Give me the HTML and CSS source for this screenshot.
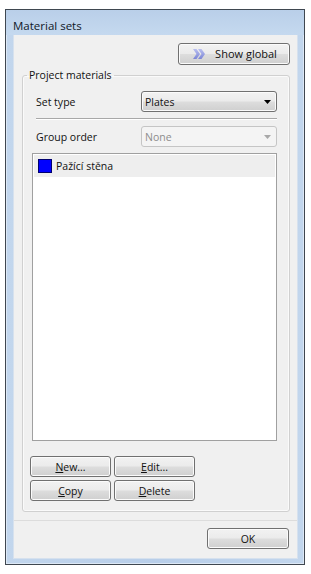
FILE: index.html
```html
<!DOCTYPE html>
<html>
<head>
<meta charset="utf-8">
<link rel="stylesheet" href="styles.css">
</head>
<body>
<div class="window">
  <div class="titlebar">Material sets</div>
  <div class="client">
    <div class="main">
      <div class="top-row">
        <button class="btn btn-global">
          <svg class="chev" width="12" height="10" viewBox="0 0 12 10">
            <defs>
              <linearGradient id="cg" x1="0" y1="0" x2="0" y2="1">
                <stop offset="0" stop-color="#b9bff0"/>
                <stop offset="1" stop-color="#7c86d6"/>
              </linearGradient>
            </defs>
            <polygon points="0,0 3.5,0 7,5 3.5,10 0,10 3.5,5" fill="url(#cg)"/>
            <polygon points="5,0 8.5,0 12,5 8.5,10 5,10 8.5,5" fill="url(#cg)"/>
          </svg>
          <span>Show <u>g</u>lobal</span>
        </button>
      </div>
      <fieldset class="group">
        <legend>Project materials</legend>
        <div class="field">
          <span class="label">Set type</span>
          <div class="combo">
            <span>Plates</span>
            <svg class="arrow" width="7" height="4" viewBox="0 0 7 4"><polygon points="0,0 7,0 3.5,4" fill="#000"/></svg>
          </div>
        </div>
        <div class="sep"></div>
        <div class="field">
          <span class="label">Group order</span>
          <div class="combo disabled">
            <span>None</span>
            <svg class="arrow" width="7" height="4" viewBox="0 0 7 4"><polygon points="0,0 7,0 3.5,4" fill="#a8a8a8"/></svg>
          </div>
        </div>
        <div class="list">
          <div class="item"><span class="swatch"></span><span>Pažící stěna</span></div>
        </div>
        <div class="btn-grid">
          <button class="btn"><u>N</u>ew...</button>
          <button class="btn"><u>E</u>dit...</button>
          <button class="btn"><u>C</u>opy</button>
          <button class="btn"><u>D</u>elete</button>
        </div>
      </fieldset>
    </div>
    <div class="footer">
      <button class="btn btn-ok">OK</button>
    </div>
  </div>
</div>
</body>
</html>
```
FILE: styles.css
```css
* { box-sizing: border-box; }
html, body { margin: 0; padding: 0; background: #ffffff; }
body {
  font-family: "Open Sans", "Noto Sans", sans-serif;
  font-size: 10.5px;
  color: #111;
}
.window {
  margin: 9px 0 0 5px;
  width: 300px;
  height: 556px;
  border: 1px solid #3f4750;
  box-shadow: inset 0 0 0 1px #dde8f5;
  background: linear-gradient(90deg, #c2d6ed 0%, #b8cee9 50%, #c2d6ed 100%);
  display: flex;
  flex-direction: column;
}
.titlebar {
  height: 25px;
  padding: 8px 0 0 7px;
  font-size: 11.5px;
  line-height: 15px;
  color: #101828;
  background: linear-gradient(180deg, #b9cfe9 0%, #c5d9ef 100%);
}
.client {
  flex: 1;
  margin: 0 6px 5px 7px;
  background: #f0f0f0;
  border: 1px solid #d6e1ee;
  border-top: none;
  display: flex;
  flex-direction: column;
}
.main {
  padding: 8px 0 0 0;
}
.top-row {
  display: flex;
  justify-content: flex-end;
  padding-right: 7px;
}
.btn {
  font-family: inherit;
  font-size: inherit;
  color: #111;
  height: 21px;
  padding: 0;
  border: 1px solid #707070;
  border-radius: 3px;
  background: linear-gradient(180deg, #f2f2f2 0%, #ebebeb 48%, #dddddd 52%, #cfcfcf 100%);
  box-shadow: inset 0 0 0 1px #fbfbfb;
  display: flex;
  align-items: center;
  justify-content: center;
  line-height: 14px;
}
.btn-global {
  width: 112px;
  height: 22px;
  gap: 10px;
  padding-left: 2px;
  font-size: 11px;
}
.chev { display: block; }
.group {
  margin: 3px 7px 0 8px;
  padding: 9px 12px 10px 9px;
  border: 1px solid #d0d0d0;
  border-radius: 3px;
  box-shadow: inset 0 0 0 1px #fafafa;
  min-width: 0;
}
.group legend {
  padding: 0 2px;
  margin-left: -5px;
  line-height: 14px;
  height: 14px;
}
.field {
  display: flex;
  align-items: center;
  height: 21px;
}
.label {
  width: 109px;
  padding-left: 4px;
  flex: none;
}
.combo {
  flex: 1;
  height: 21px;
  border: 1px solid #707070;
  border-radius: 3px;
  background: linear-gradient(180deg, #f2f2f2 0%, #ebebeb 48%, #dddddd 52%, #cfcfcf 100%);
  box-shadow: inset 0 0 0 1px #fbfbfb;
  display: flex;
  align-items: center;
  justify-content: space-between;
  padding: 0 5px 0 3px;
}
.combo.disabled {
  border-color: #c5c5c5;
  background: #f4f4f4;
  box-shadow: none;
  color: #8d8d8d;
}
.arrow { display: block; }
.sep {
  margin: 6px 0 7px 4px;
  height: 1px;
  background: #a8a8a8;
  box-shadow: 0 1px 0 #ffffff;
}
.list {
  margin-top: 6px;
  height: 288px;
  border: 1px solid #a0a0a0;
  background: #ffffff;
  padding: 1px;
}
.item {
  height: 22px;
  background: #eeeeee;
  display: flex;
  align-items: center;
  padding-left: 4px;
  gap: 4px;
}
.swatch {
  width: 14px;
  height: 14px;
  background: #0000ff;
  border: 1px solid #00006e;
}
.btn-grid {
  margin: 15px 0 0 -2px;
  display: grid;
  grid-template-columns: 81px 81px;
  gap: 3px;
}
.footer {
  margin-top: 8px;
  border-top: 1px solid #dcdcdc;
  padding: 7px 8px 0 0;
  display: flex;
  justify-content: flex-end;
}
.btn-ok {
  width: 82px;
}
```
